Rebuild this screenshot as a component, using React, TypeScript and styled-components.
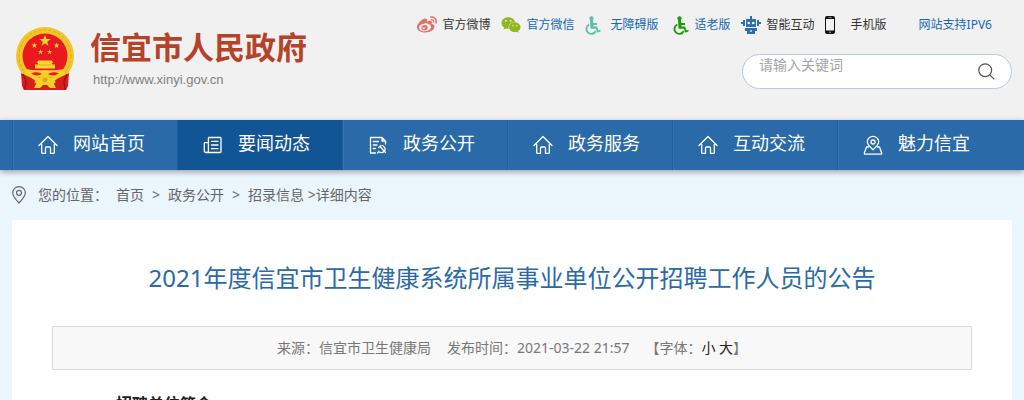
import React from 'react';
import styled, { createGlobalStyle } from 'styled-components';
import { FaWeibo, FaWeixin } from 'react-icons/fa';

const GlobalStyle = createGlobalStyle`
  *, *::before, *::after { box-sizing: border-box; }
  body {
    margin: 0;
    background: #eaf5fc;
    color: #666;
    font: 14px/24px "Noto Sans", "Noto Sans CJK SC", sans-serif;
  }
  a { color: inherit; text-decoration: none; }
  ul, ol, h1, h2, p { margin: 0; padding: 0; list-style: none; }
  svg { display: block; flex: none; }
`;

const Container = styled.div`
  max-width: 1000px;
  margin: 0 auto;
`;

const Header = styled.header`
  background: #f1f1f1;
`;

const HeaderInner = styled(Container)`
  display: flex;
  justify-content: space-between;
  height: 120px;
`;

const Brand = styled.a`
  display: flex;
  gap: 16px;
  padding: 27px 0 0 4px;
`;

const BrandText = styled.span`
  display: flex;
  flex-direction: column;
  white-space: nowrap;
`;

const BrandName = styled.span`
  color: #b5432a;
  font-size: 31px;
  font-weight: 700;
  line-height: 40px;
`;

const BrandUrl = styled.span`
  padding-left: 3px;
  color: #808080;
  font-family: "Liberation Sans", Arial, sans-serif;
  font-size: 13px;
  line-height: 26px;
`;

const Tools = styled.div`
  display: flex;
  flex-direction: column;
  align-items: flex-end;
  gap: 17px;
  padding-top: 13px;
`;

const QuickLinks = styled.ul`
  display: flex;
  gap: 10px;
  padding-right: 20px;
`;

const QuickItem = styled.li<{ $spaced?: boolean }>`
  margin-left: ${p => (p.$spaced ? 22 : 0)}px;
`;

const QuickLink = styled.a<{ $blue?: boolean }>`
  display: flex;
  align-items: center;
  gap: 6px;
  color: ${p => (p.$blue ? '#1668b0' : '#333')};
  font-size: 12px;
  white-space: nowrap;
`;

const IconSlot = styled.span<{ $align?: string; $color: string }>`
  display: flex;
  justify-content: ${p => p.$align || 'flex-start'};
  width: 20px;
  color: ${p => p.$color};
`;

const SearchForm = styled.form`
  display: flex;
  width: 270px;
  height: 35px;
  padding: 0 16px;
  border: 1px solid #b8c8e0;
  border-radius: 18px;
  background: #fff;
`;

const SearchInput = styled.input`
  flex: 1;
  min-width: 0;
  height: 20px;
  padding: 0;
  border: 0;
  outline: 0;
  background: none;
  font: inherit;
  &::placeholder { color: #a3a3a3; opacity: 1; }
`;

const SearchButton = styled.button`
  padding: 0;
  border: 0;
  background: none;
  color: #555;
  cursor: pointer;
`;

const Nav = styled.nav`
  position: relative;
  background: #2a6aa8;
  box-shadow: 0 2px 6px rgba(0, 0, 0, 0.35);
`;

const NavList = styled.ul`
  display: flex;
  max-width: 1000px;
  margin: 0 auto;
`;

const NavItem = styled.li`
  flex: 0 1 165px;
`;

const NavLink = styled.a<{ $active?: boolean }>`
  display: flex;
  gap: 15px;
  height: 50px;
  padding-left: 25px;
  border-left: 1px solid #1f5c99;
  box-shadow: inset 1px 0 0 ${p => (p.$active ? '#125595' : '#3874ae')};
  background: ${p => (p.$active ? '#125595' : 'transparent')};
  color: #fff;
  font-size: 18px;
  line-height: 46px;
  white-space: nowrap;
  svg { margin-top: 15px; }
`;

const Breadcrumb = styled.nav`
  display: flex;
  align-items: center;
  height: 50px;
`;

const Crumbs = styled.ol`
  display: flex;
  gap: 8px;
  padding-left: 12px;
`;

const Article = styled.article`
  padding: 40px 40px 24px;
  background: #fff;
`;

const Title = styled.h1`
  color: #2a6aa8;
  font-size: 24px;
  font-weight: 400;
  line-height: 36px;
  text-align: center;
`;

const Meta = styled.div`
  display: flex;
  justify-content: center;
  gap: 16px;
  margin-top: 30px;
  padding: 9px;
  border: 1px solid #dbdbdb;
  background: #f8f8f8;
  color: #777;
`;

const SizeButton = styled.button`
  padding: 0;
  border: 0;
  background: none;
  color: #222;
  font: inherit;
  cursor: pointer;
`;

const SectionHeading = styled.h2`
  margin-top: 20px;
  padding-left: 64px;
  color: #222;
  font-size: 16px;
  line-height: 28px;
`;

const STAR = 'M0-6 1.4-1.9 5.7-1.9 2.2.7 3.5 4.9 0 2.3-3.5 4.9-2.2.7-5.7-1.9-1.4-1.9Z';

const Emblem = () => (
  <svg width="58" height="63" viewBox="0 0 58 63" aria-hidden="true">
    <path d="M8 43 7 54 8 63H50L51 54 50 43Z" fill="#d81e1c" />
    <circle cx="29" cy="29" r="29" fill="#f2c62b" />
    <circle cx="29" cy="29" r="26" fill="none" stroke="#dfab1c" strokeWidth="1" strokeDasharray="3 2" />
    <circle cx="29" cy="29" r="22.500" fill="#e8191f" />
    <g fill="#f9d72f">
      <path d={STAR} transform="translate(29 14)" />
      <path d={STAR} transform="translate(18.3 18.5) scale(.5)" />
      <path d={STAR} transform="translate(40.7 18.5) scale(.5)" />
      <path d={STAR} transform="translate(24.7 25) scale(.45)" />
      <path d={STAR} transform="translate(33.7 25) scale(.45)" />
      <path d="M22 33.500H36L37 36H36V37.500H39V41.500H19V37.500H22V36H21Z" />
    </g>
    <path d="M19 38H39" stroke="#dba318" strokeWidth=".8" />
    <path d="M10 42Q19 44 29 43Q39 44 48 42L49 48Q39 53 29 49Q19 53 9 48Z" fill="#f7d02c" />
    <path d="M15 46.500Q21 44 26 47Q21 50 15 46.500ZM43 46.500Q37 44 32 47Q37 50 43 46.500Z" fill="#e8191f" />
    <path d="M5 46 13 50 19 53 17 63H8L6 59Z M53 46 45 50 39 53 41 63H50L52 59Z" fill="#d81e1c" />
    <path d="M7 47 10 55 9 62M51 47 48 55 49 62" fill="none" stroke="#a80f16" strokeWidth="1.500" />
    <path d="M16 51 23 51 29 48 35 51 42 51 37 55 40 61H34L31 58H27L24 61H18L21 55Z" fill="#f7d02c" />
    <path d="M24 62 29 58.500 34 62V63H24Z" fill="#d81e1c" />
    <circle cx="29" cy="53" r="2.500" fill="#e0a91b" />
  </svg>
);

const WheelchairIcon = () => (
  <svg width="16" height="19" viewBox="0 0 16 19" fill="none" stroke="currentColor" aria-hidden="true">
    <circle cx="6.500" cy="2.300" r="2.100" fill="currentColor" stroke="none" />
    <path d="M5 4H8L8.300 7H12V9H8.500V10.500H12L13.500 14.500 15.300 13.800 15.800 15.300 12.500 16.700 10.800 12.800H5.500Z" fill="currentColor" stroke="none" />
    <path d="M4.300 8.500A4.900 4.900 0 1 0 10.800 15" strokeWidth="1.900" />
  </svg>
);

const RobotIcon = () => (
  <svg width="20" height="18" viewBox="0 0 20 18" fill="#2f6db0" aria-hidden="true">
    <path d="M9 0H11V3H15V11H5V3H9Z" />
    <rect x="2" y="4" width="2" height="6" />
    <rect x="16" y="4" width="2" height="6" />
    <rect x="0" y="6" width="3" height="2" />
    <rect x="17" y="6" width="3" height="2" />
    <path d="M4 12H16V15H14V18H6V15H4Z" />
    <circle cx="7.700" cy="7" r="1.300" fill="#fff" />
    <circle cx="12.300" cy="7" r="1.300" fill="#fff" />
    <rect x="9" y="14" width="2" height="2" fill="#9fc0e2" />
  </svg>
);

const PhoneIcon = () => (
  <svg width="10" height="18" viewBox="0 0 10 18" aria-hidden="true">
    <rect width="10" height="18" rx="2" fill="#111" />
    <rect x="1" y="3" width="8" height="11.500" fill="#f1f1f1" />
    <rect x="3.500" y="1.200" width="3" height=".8" fill="#aaa" />
    <circle cx="5" cy="16.200" r=".8" fill="#ccc" />
  </svg>
);

const NavIcon = ({ children }: { children: React.ReactNode }) => (
  <svg width="20" height="20" viewBox="0 0 20 20" fill="none" stroke="#fff" strokeWidth="1.300"
    strokeLinecap="round" strokeLinejoin="round" aria-hidden="true">{children}</svg>
);

const HomeIcon = () => (
  <NavIcon>
    <path d="M1 10.500 10 1.500 19 10.500" />
    <path d="M3.700 9.500V17.500Q3.700 18.400 4.600 18.400H7.500V13Q7.500 12 8.500 12H11.500Q12.500 12 12.500 13V18.400H15.400Q16.300 18.400 16.300 17.500V9.500" />
  </NavIcon>
);

const NewsIcon = () => (
  <NavIcon>
    <path d="M6 2.500H17.200Q18 2.500 18 3.300V16.700Q18 17.500 17.200 17.500H3Q1.300 17.500 1.300 15.800V8.500Q1.300 7.700 2 7.700H5.400V3.200Q5.400 2.500 6 2.500ZM5.400 7.700V15.800Q5.400 17.500 4 17.500" />
    <path d="M8.500 6.300H15M8.500 10H15M8.500 13.700H15" />
  </NavIcon>
);

const PolicyIcon = () => (
  <NavIcon>
    <path d="M7.500 18H2.500V2.500H14L17.500 6V9M14 2.500V6H17.500" />
    <path d="M5.300 6.500H10.500M5.300 10H9M5.300 13.500H7.500" />
    <path d="M10.500 12.500 13 10.500M12 11.500 17.500 17.500M14.500 10.500Q18.500 13 16.500 16Q14 19 10.500 16.500L9.500 18" />
  </NavIcon>
);

const PlaceIcon = () => (
  <NavIcon>
    <path d="M10 14.800Q4.300 9.600 4.300 6.800A5.700 5.500 0 0 1 15.700 6.800Q15.700 9.600 10 14.800Z" />
    <circle cx="10" cy="7" r="2" />
    <path d="M5.500 12H3.500L1.300 18Q1.200 19.200 2 19.200H18Q18.800 19.200 18.700 18L16.500 12H14.500" />
  </NavIcon>
);

const PinIcon = () => (
  <svg width="14" height="18" viewBox="0 0 14 18" fill="none" stroke="#666" strokeWidth="1.200" aria-hidden="true">
    <path d="M7 17Q.7 10.500.7 6.800A6.300 6.200 0 0 1 13.300 6.800Q13.300 10.500 7 17Z" />
    <circle cx="7" cy="6.800" r="2.500" />
  </svg>
);

const quickLinks = [
  { text: '官方微博', color: '#e66f6c', icon: <FaWeibo size={20} /> },
  { text: '官方微信', color: '#8fb820', icon: <FaWeixin size={20} />, blue: true },
  { text: '无障碍版', color: '#5bbfa8', icon: <WheelchairIcon />, blue: true },
  { text: '适老版', color: '#1f9a0e', icon: <WheelchairIcon />, blue: true, align: 'flex-end' },
  { text: '智能互动', color: '#2f6db0', icon: <RobotIcon /> },
  { text: '手机版', color: '#111', icon: <PhoneIcon /> },
];

const navItems = [
  { text: '网站首页', icon: <HomeIcon /> },
  { text: '要闻动态', icon: <NewsIcon />, active: true },
  { text: '政务公开', icon: <PolicyIcon /> },
  { text: '政务服务', icon: <HomeIcon /> },
  { text: '互动交流', icon: <HomeIcon /> },
  { text: '魅力信宜', icon: <PlaceIcon /> },
];

export default function App() {
  return (
    <>
      <GlobalStyle />
      <Header>
        <HeaderInner>
          <Brand href="#">
            <Emblem />
            <BrandText>
              <BrandName>信宜市人民政府</BrandName>
              <BrandUrl>http://www.xinyi.gov.cn</BrandUrl>
            </BrandText>
          </Brand>
          <Tools>
            <QuickLinks>
              {quickLinks.map(l => (
                <QuickItem key={l.text}>
                  <QuickLink href="#" $blue={l.blue}>
                    <IconSlot $color={l.color} $align={l.align}>{l.icon}</IconSlot>
                    {l.text}
                  </QuickLink>
                </QuickItem>
              ))}
              <QuickItem $spaced>
                <QuickLink href="#" $blue>网站支持IPV6</QuickLink>
              </QuickItem>
            </QuickLinks>
            <SearchForm role="search">
              <SearchInput type="text" aria-label="请输入关键词" placeholder="请输入关键词" />
              <SearchButton type="button" aria-label="搜索">
                <svg width="17" height="17" viewBox="0 0 17 17" fill="none" stroke="currentColor" strokeWidth="1.200">
                  <circle cx="7.200" cy="7.200" r="6.400" />
                  <path d="M11.800 11.800 16.300 16.300" />
                </svg>
              </SearchButton>
            </SearchForm>
          </Tools>
        </HeaderInner>
      </Header>
      <Nav>
        <NavList>
          {navItems.map(n => (
            <NavItem key={n.text}>
              <NavLink href="#" $active={n.active}>{n.icon}{n.text}</NavLink>
            </NavItem>
          ))}
        </NavList>
      </Nav>
      <Container as="main">
        <Breadcrumb>
          <PinIcon />
          <Crumbs>
            <li>您的位置：</li>
            <li><a href="#">首页</a></li>
            <li>&gt;</li>
            <li><a href="#">政务公开</a></li>
            <li>&gt;</li>
            <li><a href="#">招录信息</a> &gt;详细内容</li>
          </Crumbs>
        </Breadcrumb>
        <Article>
          <Title>2021年度信宜市卫生健康系统所属事业单位公开招聘工作人员的公告</Title>
          <Meta>
            <span>来源：信宜市卫生健康局</span>
            <span>发布时间：2021-03-22 21:57</span>
            <span>
              【字体：<SizeButton type="button">小</SizeButton> <SizeButton type="button">大</SizeButton>】
            </span>
          </Meta>
          <SectionHeading>招聘单位简介</SectionHeading>
        </Article>
      </Container>
    </>
  );
}
